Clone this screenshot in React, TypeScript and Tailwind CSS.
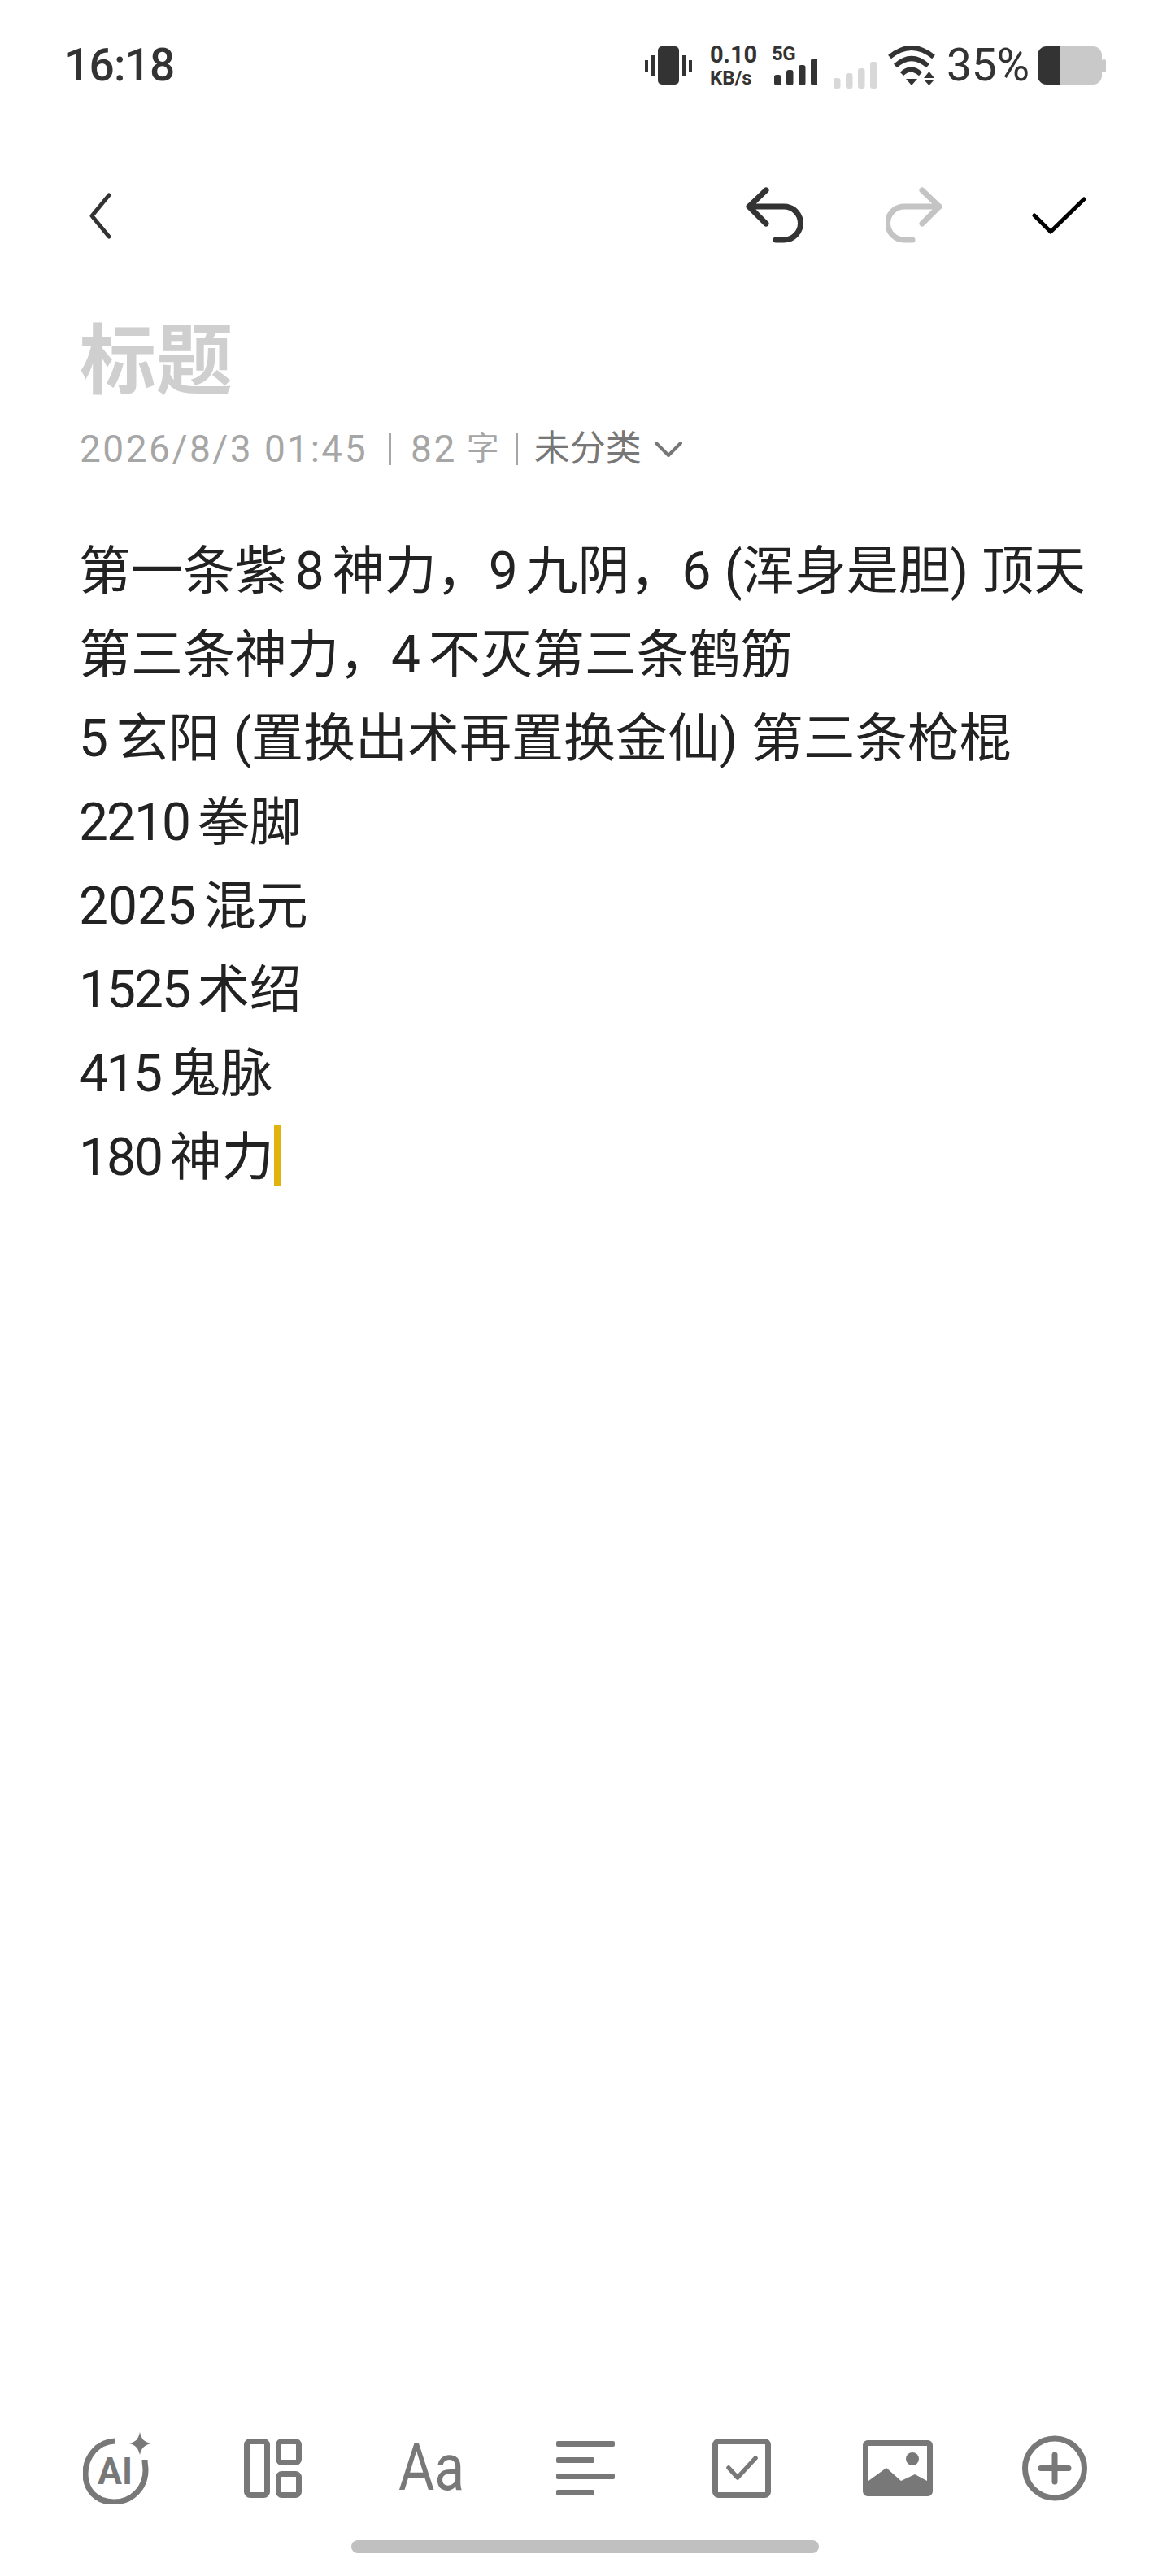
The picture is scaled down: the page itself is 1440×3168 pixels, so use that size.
const sans = "font-['Roboto','Noto_Sans_CJK_SC',sans-serif]";

function Vibrate() {
  return (
    <svg width="58" height="47" viewBox="0 0 58 47" fill="#333">
      <rect x="16" y="0" width="26" height="47" rx="5" />
      <rect x="0" y="17" width="4" height="14" />
      <rect x="8" y="11" width="4" height="26" />
      <rect x="46" y="11" width="4" height="26" />
      <rect x="54" y="17" width="4" height="14" />
    </svg>
  );
}

function Signal({ color }: { color: string }) {
  const bars = [13, 19, 25, 33];
  return (
    <svg width="53" height="33" viewBox="0 0 53 33" fill={color}>
      {bars.map((h, i) => (
        <rect key={i} x={i * 15} y={33 - h} width="8.500" height={h} rx="3" />
      ))}
    </svg>
  );
}

function Wifi() {
  return (
    <svg width="59" height="49" viewBox="0 0 59 49" fill="none" stroke="#333" strokeWidth="6">
      <path d="M3 14Q30-8 57 14" />
      <path d="M10 25Q30 7 50 25" />
      <path d="M18 35Q29 24 41 35" />
      <path d="M23 41H37L30 49Z" fill="#333" stroke="none" />
      <path d="M45 40L51.500 32L58 40Z" fill="#333" stroke="none" />
      <path d="M45 42H58L51.500 49Z" fill="#333" stroke="none" />
    </svg>
  );
}

function Battery() {
  return (
    <svg width="84" height="47" viewBox="0 0 84 47">
      <rect x="79" y="16" width="5" height="16" rx="2" fill="#c9c9c9" />
      <rect x="0" y="0" width="79" height="47" rx="11" fill="#c9c9c9" />
      <path d="M27 0H11A11 11 0 0 0 0 11V36A11 11 0 0 0 11 47H27Z" fill="#333" />
    </svg>
  );
}

function StatusBar() {
  return (
    <div className="flex h-[160px] shrink-0 items-center pl-[79px] pr-[80px]">
      <span className="text-[55px] leading-none font-medium text-[#333] tracking-[-0.8px]">16:18</span>
      <div className="ml-auto flex items-center">
        <Vibrate />
        <div className="ml-[22px] mt-[3px] flex w-[56px] flex-col font-bold text-[#333]">
          <span className="text-[29px] leading-[29px]">0.10</span>
          <span className="text-[24px] leading-[29px]">KB/s</span>
        </div>
        <div className="ml-[23px] flex w-[53px] flex-col">
          <span className="-ml-[3px] text-[24px] leading-[22px] font-bold tracking-[-0.5px] text-[#333]">5G</span>
          <div className="-mt-[5px] flex"><Signal color="#333" /></div>
        </div>
        <div className="ml-[20px] mt-[25px] flex"><Signal color="#d8d8d8" /></div>
        <div className="ml-[13px] flex"><Wifi /></div>
        <span className="ml-[14px] text-[55px] leading-none text-[#333]">35%</span>
        <div className="ml-[10px] flex"><Battery /></div>
      </div>
    </div>
  );
}

function ActionBar() {
  return (
    <div className="flex h-[206px] shrink-0 items-center pl-[110px] pr-[105px] pt-[4px]">
      <svg width="27" height="57" viewBox="0 0 27 57" fill="none" stroke="#333" strokeWidth="5" strokeLinecap="round" strokeLinejoin="round">
        <path d="M24 3L3 28.500L24 54" />
      </svg>
      <svg className="ml-auto" width="70" height="70" viewBox="0 0 70 70" fill="none" stroke="#333" strokeWidth="7" strokeLinecap="round" strokeLinejoin="round">
        <path d="M25 4L4 24L25 45M4 24H47A20.500 20.500 0 0 1 47 65H37" />
      </svg>
      <svg className="ml-[102px]" width="70" height="70" viewBox="0 0 70 70" fill="none" stroke="#c4c4c4" strokeWidth="7" strokeLinecap="round" strokeLinejoin="round">
        <path d="M45 4L66 24L45 45M66 24H23A20.500 20.500 0 0 0 23 65H33" />
      </svg>
      <svg className="ml-[110px]" width="66" height="46" viewBox="0 0 66 46" fill="none" stroke="#000" strokeWidth="5" strokeLinecap="round" strokeLinejoin="round">
        <path d="M3 23L23 43L64 3" />
      </svg>
    </div>
  );
}

// spaces next to the brackets are wider than the ones next to digits
const bodyLines = [
  "第一条紫 8 神力，9 九阴，6\u2005(浑身是胆)\u2005顶天",
  "第三条神力，4 不灭第三条鹤筋",
  "5 玄阳\u2005(置换出术再置换金仙)\u2005第三条枪棍",
];

const countLines = [
  { num: "2210", rest: "拳脚", track: "tracking-[-2px]" },
  { num: "2025", rest: "混元", track: "tracking-normal" },
  { num: "1525", rest: "术绍", track: "tracking-[-2px]" },
  { num: "415", rest: "鬼脉", track: "tracking-[-2.5px]" },
];

function Toolbar() {
  const c = "#787878";
  return (
    <div className="mt-auto flex items-center pl-[102px]">
      <svg width="84" height="89" viewBox="0 0 84 89" fill="none">
        <path d="M39 11C18 12 3 30 3 51C3 71 16 86 38 86C61 86 77 68 77 47C77 42 76 39 76 34" stroke={c} strokeWidth="7" />
        <path d="M70 0C72 9 75 12 84 14C75 16 72 20 70 28C68 20 65 16 57 14C65 12 68 9 70 0Z" fill={c} />
        <text x="18" y="64" fontFamily="Roboto, sans-serif" fontSize="46" fontWeight="700" fill={c} textLength="43" lengthAdjust="spacingAndGlyphs">AI</text>
      </svg>
      <svg className="ml-[114px]" width="71" height="73" viewBox="0 0 71 73" fill="none" stroke={c} strokeWidth="7">
        <rect x="3.500" y="3.500" width="25" height="66" rx="4" />
        <rect x="42.500" y="3.500" width="25" height="26" rx="4" />
        <rect x="42.500" y="43.500" width="25" height="26" rx="4" />
      </svg>
      <span className="ml-[119px] w-[94px] origin-left scale-x-[0.85] text-[80px] leading-[73px] whitespace-nowrap text-[#787878]">Aa</span>
      <svg className="ml-[100px]" width="72" height="67" viewBox="0 0 72 67" fill={c}>
        <rect y="0" width="72" height="7" rx="2" />
        <rect y="20" width="47" height="7" rx="2" />
        <rect y="40" width="72" height="7" rx="2" />
        <rect y="60" width="47" height="7" rx="2" />
      </svg>
      <svg className="ml-[120px]" width="72" height="73" viewBox="0 0 72 73" fill="none" stroke={c}>
        <rect x="3.500" y="3.500" width="65" height="66" rx="4" strokeWidth="7" />
        <path d="M20 36L31 48L53 24" strokeWidth="5.500" strokeLinecap="round" strokeLinejoin="round" />
      </svg>
      <svg className="ml-[113px]" width="86" height="69" viewBox="0 0 86 69" fill={c}>
        <path fillRule="evenodd" d="M6 0H80A6 6 0 0 1 86 6V63A6 6 0 0 1 80 69H6A6 6 0 0 1 0 63V6A6 6 0 0 1 6 0ZM7 7V50L29 34L47 50L64 42L79 50V7Z" />
        <ellipse cx="61" cy="23" rx="8" ry="8" />
      </svg>
      <svg className="ml-[110px]" width="80" height="81" viewBox="0 0 80 81" fill="none" stroke={c} strokeLinecap="round">
        <circle cx="40" cy="40.500" r="36.500" strokeWidth="7" />
        <path d="M40 24V57M23 40.500H57" strokeWidth="7" />
      </svg>
    </div>
  );
}

export default function App() {
  return (
    <div className={`${sans} flex h-[3168px] w-[1440px] flex-col overflow-hidden bg-white`}>
      <StatusBar />
      <ActionBar />
      <div className="mt-[14px] h-[130px] pl-[98px] text-[94px] leading-[130px] font-bold text-[#cfcfcf]">标题</div>
      <div className="flex h-[84px] items-center pl-[98px] text-[46px] text-[#a6a6a6]">
        <span className="tracking-[2.5px]">2026/8/3 01:45</span>
        <div className="ml-[26px] h-[40px] w-[3px] bg-[#a6a6a6]" />
        <span className="ml-[24px] tracking-[2.5px]">82</span>
        <span className="ml-[12px] text-[40px]">字</span>
        <div className="ml-[20px] h-[40px] w-[3px] bg-[#a6a6a6]" />
        <span className="ml-[20px] text-[44px] text-[#777]">未分类</span>
        <svg className="ml-[16px]" width="34" height="19" viewBox="0 0 34 19" fill="none" stroke="#777" strokeWidth="4" strokeLinecap="round" strokeLinejoin="round">
          <path d="M2 2L17 17L32 2" />
        </svg>
      </div>
      <div className="mt-[57px] pl-[97px] text-[64px] leading-[103px] [word-spacing:-6px] text-[#222]">
        {bodyLines.map((l) => (
          <div key={l} className="whitespace-pre">{l}</div>
        ))}
        {countLines.map((l) => (
          <div key={l.num} className="whitespace-pre">
            <span className={l.track}>{l.num}</span> {l.rest}
          </div>
        ))}
        <div className="whitespace-pre">
          <span className="relative">
            <span className="tracking-[-2px]">180</span> 神力
            <span className="absolute left-full top-[-2px] h-[75px] w-[8px] bg-[#e0b30e]" />
          </span>
        </div>
      </div>
      <Toolbar />
      <div className="mb-[28px] ml-[432px] mt-[44px] h-[16px] w-[575px] rounded-full bg-[#c0c0c0]" />
    </div>
  );
}
